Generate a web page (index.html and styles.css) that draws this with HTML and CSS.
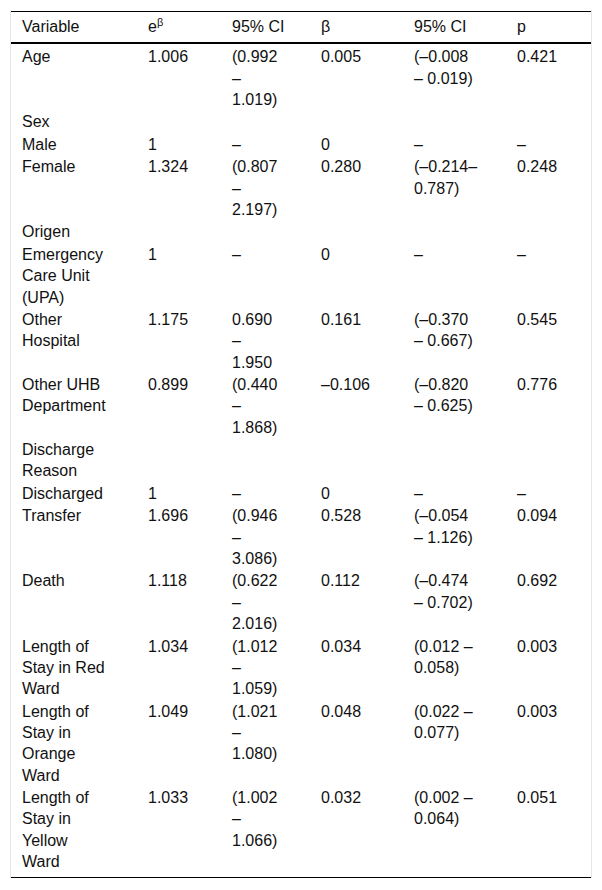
FILE: index.html
```html
<!DOCTYPE html>
<html lang="en">
<head>
    <meta charset="UTF-8">
    <meta name="viewport" content="width=device-width, initial-scale=1.0">
    <title>Regression table</title>
    <link rel="stylesheet" href="styles.css">
</head>
<body>

    <div class="table-wrap">
        <table class="results">
            <colgroup>
                <col class="c-var">
                <col class="c-exp">
                <col class="c-ci">
                <col class="c-beta">
                <col class="c-ci2">
                <col class="c-p">
            </colgroup>
            <thead>
                <tr>
                    <th class="var">Variable</th>
                    <th>e<sup>β</sup></th>
                    <th class="ci">95% CI</th>
                    <th>β</th>
                    <th class="ci2">95% CI</th>
                    <th>p</th>
                </tr>
            </thead>
            <tbody>
                <tr>
                    <td class="var">Age</td>
                    <td>1.006</td>
                    <td class="ci">(0.992 – 1.019)</td>
                    <td>0.005</td>
                    <td class="ci2">(–0.008 – 0.019)</td>
                    <td>0.421</td>
                </tr>
                <tr>
                    <td class="var">Sex</td>
                    <td></td><td class="ci"></td><td></td><td class="ci2"></td><td></td>
                </tr>
                <tr>
                    <td class="var">Male</td>
                    <td>1</td>
                    <td class="ci">–</td>
                    <td>0</td>
                    <td class="ci2">–</td>
                    <td>–</td>
                </tr>
                <tr>
                    <td class="var">Female</td>
                    <td>1.324</td>
                    <td class="ci">(0.807 – 2.197)</td>
                    <td>0.280</td>
                    <td class="ci2">(–0.214–0.787)</td>
                    <td>0.248</td>
                </tr>
                <tr>
                    <td class="var">Origen</td>
                    <td></td><td class="ci"></td><td></td><td class="ci2"></td><td></td>
                </tr>
                <tr>
                    <td class="var">Emergency Care Unit (UPA)</td>
                    <td>1</td>
                    <td class="ci">–</td>
                    <td>0</td>
                    <td class="ci2">–</td>
                    <td>–</td>
                </tr>
                <tr>
                    <td class="var">Other Hospital</td>
                    <td>1.175</td>
                    <td class="ci">0.690 – 1.950</td>
                    <td>0.161</td>
                    <td class="ci2">(–0.370 – 0.667)</td>
                    <td>0.545</td>
                </tr>
                <tr>
                    <td class="var">Other UHB Department</td>
                    <td>0.899</td>
                    <td class="ci">(0.440 – 1.868)</td>
                    <td>–0.106</td>
                    <td class="ci2">(–0.820 – 0.625)</td>
                    <td>0.776</td>
                </tr>
                <tr>
                    <td class="var">Discharge Reason</td>
                    <td></td><td class="ci"></td><td></td><td class="ci2"></td><td></td>
                </tr>
                <tr>
                    <td class="var">Discharged</td>
                    <td>1</td>
                    <td class="ci">–</td>
                    <td>0</td>
                    <td class="ci2">–</td>
                    <td>–</td>
                </tr>
                <tr>
                    <td class="var">Transfer</td>
                    <td>1.696</td>
                    <td class="ci">(0.946 – 3.086)</td>
                    <td>0.528</td>
                    <td class="ci2">(–0.054 – 1.126)</td>
                    <td>0.094</td>
                </tr>
                <tr>
                    <td class="var">Death</td>
                    <td>1.118</td>
                    <td class="ci">(0.622 – 2.016)</td>
                    <td>0.112</td>
                    <td class="ci2">(–0.474 – 0.702)</td>
                    <td>0.692</td>
                </tr>
                <tr>
                    <td class="var">Length of Stay in Red Ward</td>
                    <td>1.034</td>
                    <td class="ci">(1.012 – 1.059)</td>
                    <td>0.034</td>
                    <td class="ci2">(0.012 – 0.058)</td>
                    <td>0.003</td>
                </tr>
                <tr>
                    <td class="var">Length of Stay in Orange Ward</td>
                    <td>1.049</td>
                    <td class="ci">(1.021 – 1.080)</td>
                    <td>0.048</td>
                    <td class="ci2">(0.022 – 0.077)</td>
                    <td>0.003</td>
                </tr>
                <tr>
                    <td class="var">Length of Stay in Yellow Ward</td>
                    <td>1.033</td>
                    <td class="ci">(1.002 – 1.066)</td>
                    <td>0.032</td>
                    <td class="ci2">(0.002 – 0.064)</td>
                    <td>0.051</td>
                </tr>
            </tbody>
        </table>
    </div>

</body>
</html>
```

FILE: styles.css
```css
body {
    font-family: 'Liberation Sans', Arial, sans-serif;
    font-size: 16px;
    line-height: 21.3px;
    color: #111;
    background-color: #ffffff;
    margin: 0;
    padding: 10px 10px 0 10px;
}

.table-wrap {
    border-left: 1px solid #e6e6e6;
    border-right: 1px solid #e6e6e6;
    padding-top: 1px;
}

.results {
    width: 100%;
    table-layout: fixed;
    border-collapse: collapse;
    border-top: 1px solid #000;
    border-bottom: 1px solid #000;
}

.c-var { width: 126px; }
.c-exp { width: 84px; }
.c-ci { width: 89px; }
.c-beta { width: 93px; }
.c-ci2 { width: 103px; }
.c-p { width: 85px; }

.results th,
.results td {
    text-align: left;
    vertical-align: top;
    font-weight: normal;
    padding: 0.6px 10px 0.6px 11px;
}

.results thead th {
    padding-top: 4px;
    padding-bottom: 5px;
    border-bottom: 2px solid #000;
    white-space: nowrap;
}

.results tbody tr:first-child td {
    padding-top: 2px;
}

.results tbody tr:last-child td {
    padding-bottom: 5px;
}

.results .var {
    padding-right: 29px;
}

.results .ci {
    padding-right: 28px;
}

.results .ci2 {
    padding-right: 27px;
}

.results sup {
    font-size: 11px;
    line-height: 0;
    vertical-align: 6px;
}
```
